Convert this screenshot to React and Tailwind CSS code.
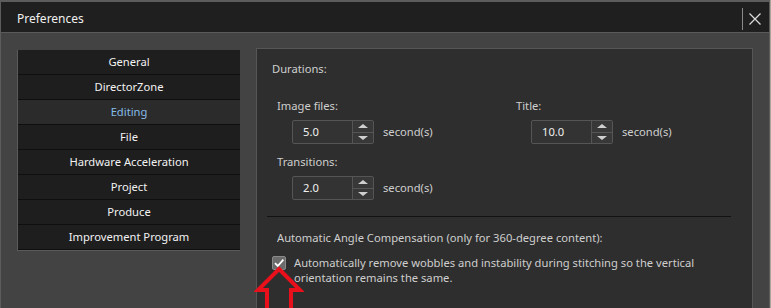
import React from "react";

const items = [
    "General",
    "DirectorZone",
    "Editing",
    "File",
    "Hardware Acceleration",
    "Project",
    "Produce",
    "Improvement Program",
];

const Spinner = ({ value }) => (
    <div className="flex h-[24px] w-[82px] rounded-[2px] border border-[#555555] bg-[#333333]">
        <div className="flex flex-1 items-center pl-[10px] text-[#f0f0f0]">{value}</div>
        <div className="flex w-[21px] flex-col border-l border-[#555555] bg-[#383838]">
            <div className="flex flex-1 items-center justify-center border-b border-[#555555]">
                <div className="h-0 w-0 border-x-[5px] border-b-[4px] border-x-transparent border-b-[#d0d0d0]" />
            </div>
            <div className="flex flex-1 items-center justify-center">
                <div className="h-0 w-0 border-x-[5px] border-t-[4px] border-x-transparent border-t-[#d0d0d0]" />
            </div>
        </div>
    </div>
);

const Field = ({ label, value }) => (
    <div className="flex flex-col">
        <div className="h-[16px] leading-[16px]">{label}</div>
        <div className="mt-[6px] ml-[15px] flex items-center gap-[9px]">
            <Spinner value={value} />
            <span>second(s)</span>
        </div>
    </div>
);

export default function App() {
    return (
        <div
            className="relative h-[308px] w-[771px] overflow-hidden bg-[#a8a49c] text-[11.2px]"
            style={{ fontFamily: '"Noto Sans", "Open Sans", sans-serif' }}
        >
            <div className="flex h-[310px] w-[770px] flex-col border-x border-t-2 border-[#5c5c5c] bg-[#434343]">
                {/* title bar */}
                <div className="flex h-[31px] shrink-0 items-center border-b border-[#5a5a5a] bg-[#1f1f1f] pl-[16px] pr-[8px] pt-[3px]">
                    <span className="text-[12px] text-[#f0f0f0]">Preferences</span>
                    <div className="ml-auto flex items-center">
                        <div className="h-[22px] w-px bg-[#8a8a8a]" />
                        <svg className="ml-[6px]" width="12" height="12" viewBox="0 0 12 12">
                            <path d="M0.5 0.5 L11.5 11.5 M11.5 0.5 L0.5 11.5" stroke="#d8d8d8" strokeWidth="1.3" />
                        </svg>
                    </div>
                </div>

                {/* body */}
                <div className="flex flex-1 gap-[16px] px-[16px] pt-[15px]">
                    <div className="mt-[2px] flex h-[201px] w-[223px] shrink-0 flex-col gap-px border-b border-l border-[#5a5a5a] bg-[#0f0f0f]">
                        {items.map((item) => (
                            <div
                                key={item}
                                className={
                                    item === "Editing"
                                        ? "flex h-[24px] items-center justify-center bg-[#2b2b2b] text-[#86bbe8]"
                                        : "flex h-[24px] items-center justify-center bg-[#1e1e1e] text-[#f2f2f2]"
                                }
                            >
                                {item}
                            </div>
                        ))}
                    </div>

                    <div className="flex-1 border border-[#565656] bg-[#2e2e2e] text-[#cfcfcf]">
                        <div className="ml-[15px] mt-[12px] h-[16px] leading-[16px]">Durations:</div>
                        <div className="ml-[20px] mt-[21px] flex">
                            <div className="flex w-[239px] flex-col gap-[10px]">
                                <Field label="Image files:" value="5.0" />
                                <Field label="Transitions:" value="2.0" />
                            </div>
                            <Field label="Title:" value="10.0" />
                        </div>
                        <div className="ml-[10px] mt-[16px] h-px w-[464px] bg-[#121212]" />
                        <div className="ml-[20px] mt-[13px] h-[16px] leading-[16px]">
                            Automatic Angle Compensation (only for 360-degree content):
                        </div>
                        <div className="ml-[15px] mt-[9px] flex gap-[8px]">
                            <div className="mt-[1px] flex h-[14px] w-[14px] shrink-0 items-center justify-center rounded-[2px] border border-[#8a8a8a] bg-[#6b6b6b]">
                                <svg width="12" height="12" viewBox="0 0 12 12">
                                    <path d="M2 6.2 L4.8 9 L10.4 2.6" fill="none" stroke="#ffffff" strokeWidth="1.8" />
                                </svg>
                            </div>
                            <div className="leading-[15px]">
                                <div>Automatically remove wobbles and instability during stitching so the vertical</div>
                                <div>orientation remains the same.</div>
                            </div>
                        </div>
                    </div>
                </div>
            </div>

            {/* red arrow annotation */}
            <svg className="absolute left-[254px] top-[265px]" width="50" height="50" viewBox="0 0 50 50">
                <path
                    d="M25 4 L46 25 L37 25 L37 48 L13 48 L13 25 L4 25 Z"
                    fill="none"
                    stroke="#e8101a"
                    strokeWidth="4"
                    strokeLinejoin="miter"
                />
            </svg>
        </div>
    );
}
